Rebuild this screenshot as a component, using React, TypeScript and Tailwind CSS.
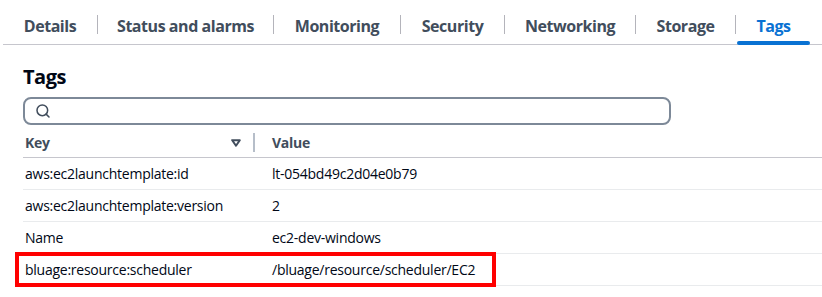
import React from 'react';
import { Search } from 'lucide-react';

const TABS = [
  { label: 'Details', w: 94 },
  { label: 'Status and alarms', w: 175 },
  { label: 'Monitoring', w: 126 },
  { label: 'Security', w: 103 },
  { label: 'Networking', w: 130 },
  { label: 'Storage', w: 99 },
  { label: 'Tags', w: 75, active: true },
];

const ROWS = [
  { key: 'aws:ec2launchtemplate:id', value: 'lt-054bd49c2d04e0b79' },
  { key: 'aws:ec2launchtemplate:version', value: '2' },
  { key: 'Name', value: 'ec2-dev-windows' },
  { key: 'bluage:resource:scheduler', value: '/bluage/resource/scheduler/EC2' },
];

export default function App() {
  return (
    <div
      className="relative w-[822px] h-[297px] overflow-hidden bg-white"
      style={{ fontFamily: '"Open Sans", "Liberation Sans", sans-serif' }}
    >
      {/* tab strip */}
      <div className="ml-[3px] flex h-[45px] border-b border-[#c6c6cd]">
        {TABS.map((tab, i) => (
          <React.Fragment key={tab.label}>
            {i > 0 && <div className="mt-[15px] h-[19px] w-[1px] bg-[#b4b4bb]" />}
            <div
              className="relative flex justify-center pt-[15px]"
              style={{ width: tab.w }}
            >
              <span
                className={`text-[16px] leading-[22px] font-bold tracking-[-0.45px] ${tab.active ? 'text-[#0972d3]' : 'text-[#414d5c]'}`}
              >
                {tab.label}
              </span>
              {tab.active && (
                <div className="absolute left-[1px] right-[1px] top-[41px] h-[4px] rounded-full bg-[#0972d3]" />
              )}
            </div>
          </React.Fragment>
        ))}
      </div>

      <h2 className="ml-[23px] mt-[18px] text-[20px] leading-[28px] font-bold text-[#000716] tracking-[-0.5px]">
        Tags
      </h2>

      <div className="ml-[23px] mt-[6px] flex h-[28px] w-[648px] items-center rounded-[8px] border-2 border-[#7d8998] pl-[10px]">
        <Search size={16} strokeWidth={2.3} color="#414d5c" />
      </div>

      {/* table */}
      <div className="ml-[23px] text-[14px] leading-[20px] tracking-[-0.25px]">
        <div className="flex h-[33px] items-start border-b border-[#c6c6cd] pt-[8px] pl-[2px]">
          <span className="w-[206px] font-bold text-[#414d5c]">Key</span>
          <svg width="10" height="8" viewBox="0 0 10 8" className="mt-[6px]">
            <polygon points="1.2,1.2 8.8,1.2 5,6.8" fill="white" stroke="#414d5c" strokeWidth="2" strokeLinejoin="round" />
          </svg>
          <div className="ml-[12px] h-[19px] w-[2px] bg-[#b6bec9]" />
          <span className="ml-[17px] font-bold text-[#414d5c]">Value</span>
        </div>
        {ROWS.map(row => (
          <div key={row.key} className="flex h-[32px] items-center border-b border-[#e9ebed] text-[#000716]">
            <span className="w-[249px] pl-[2px]">{row.key}</span>
            <span>{row.value}</span>
          </div>
        ))}
      </div>

      {/* highlight annotation */}
      <div className="absolute left-[15px] top-[252px] h-[35px] w-[481px] border-4 border-[#ff0000]" />
    </div>
  );
}
